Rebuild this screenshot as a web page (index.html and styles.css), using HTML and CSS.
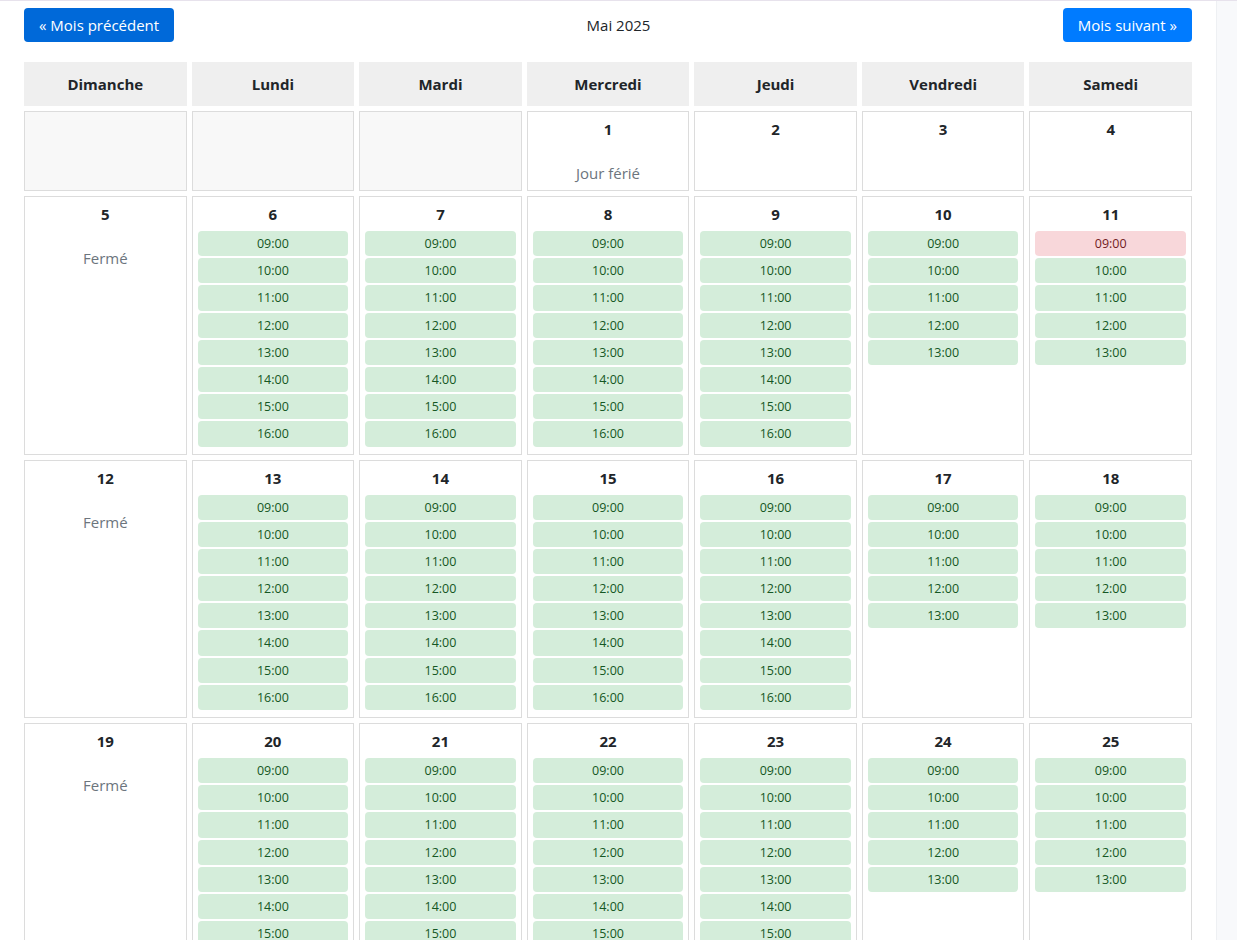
FILE: index.html
```html
<!DOCTYPE html>
<html lang="fr">
<head>
<meta charset="utf-8">
<title>Calendrier - Mai 2025</title>
<link rel="stylesheet" href="styles.css">
</head>
<body>
<div class="page">
  <main class="main">
    <div class="topbar">
      <button class="btn btn-prev">« Mois précédent</button>
      <div class="month">Mai 2025</div>
      <button class="btn btn-next">Mois suivant »</button>
    </div>
    <div class="calendar">
      <div class="head">Dimanche</div>
      <div class="head">Lundi</div>
      <div class="head">Mardi</div>
      <div class="head">Mercredi</div>
      <div class="head">Jeudi</div>
      <div class="head">Vendredi</div>
      <div class="head">Samedi</div>

      <div class="cell empty"></div>
      <div class="cell empty"></div>
      <div class="cell empty"></div>
      <div class="cell"><div class="num">1</div><div class="note">Jour férié</div></div>
      <div class="cell"><div class="num">2</div></div>
      <div class="cell"><div class="num">3</div></div>
      <div class="cell"><div class="num">4</div></div>

      <div class="cell"><div class="num">5</div><div class="note">Fermé</div></div>
      <div class="cell"><div class="num">6</div><div class="slot">09:00</div><div class="slot">10:00</div><div class="slot">11:00</div><div class="slot">12:00</div><div class="slot">13:00</div><div class="slot">14:00</div><div class="slot">15:00</div><div class="slot">16:00</div></div>
      <div class="cell"><div class="num">7</div><div class="slot">09:00</div><div class="slot">10:00</div><div class="slot">11:00</div><div class="slot">12:00</div><div class="slot">13:00</div><div class="slot">14:00</div><div class="slot">15:00</div><div class="slot">16:00</div></div>
      <div class="cell"><div class="num">8</div><div class="slot">09:00</div><div class="slot">10:00</div><div class="slot">11:00</div><div class="slot">12:00</div><div class="slot">13:00</div><div class="slot">14:00</div><div class="slot">15:00</div><div class="slot">16:00</div></div>
      <div class="cell"><div class="num">9</div><div class="slot">09:00</div><div class="slot">10:00</div><div class="slot">11:00</div><div class="slot">12:00</div><div class="slot">13:00</div><div class="slot">14:00</div><div class="slot">15:00</div><div class="slot">16:00</div></div>
      <div class="cell"><div class="num">10</div><div class="slot">09:00</div><div class="slot">10:00</div><div class="slot">11:00</div><div class="slot">12:00</div><div class="slot">13:00</div></div>
      <div class="cell"><div class="num">11</div><div class="slot booked">09:00</div><div class="slot">10:00</div><div class="slot">11:00</div><div class="slot">12:00</div><div class="slot">13:00</div></div>

      <div class="cell"><div class="num">12</div><div class="note">Fermé</div></div>
      <div class="cell"><div class="num">13</div><div class="slot">09:00</div><div class="slot">10:00</div><div class="slot">11:00</div><div class="slot">12:00</div><div class="slot">13:00</div><div class="slot">14:00</div><div class="slot">15:00</div><div class="slot">16:00</div></div>
      <div class="cell"><div class="num">14</div><div class="slot">09:00</div><div class="slot">10:00</div><div class="slot">11:00</div><div class="slot">12:00</div><div class="slot">13:00</div><div class="slot">14:00</div><div class="slot">15:00</div><div class="slot">16:00</div></div>
      <div class="cell"><div class="num">15</div><div class="slot">09:00</div><div class="slot">10:00</div><div class="slot">11:00</div><div class="slot">12:00</div><div class="slot">13:00</div><div class="slot">14:00</div><div class="slot">15:00</div><div class="slot">16:00</div></div>
      <div class="cell"><div class="num">16</div><div class="slot">09:00</div><div class="slot">10:00</div><div class="slot">11:00</div><div class="slot">12:00</div><div class="slot">13:00</div><div class="slot">14:00</div><div class="slot">15:00</div><div class="slot">16:00</div></div>
      <div class="cell"><div class="num">17</div><div class="slot">09:00</div><div class="slot">10:00</div><div class="slot">11:00</div><div class="slot">12:00</div><div class="slot">13:00</div></div>
      <div class="cell"><div class="num">18</div><div class="slot">09:00</div><div class="slot">10:00</div><div class="slot">11:00</div><div class="slot">12:00</div><div class="slot">13:00</div></div>

      <div class="cell"><div class="num">19</div><div class="note">Fermé</div></div>
      <div class="cell"><div class="num">20</div><div class="slot">09:00</div><div class="slot">10:00</div><div class="slot">11:00</div><div class="slot">12:00</div><div class="slot">13:00</div><div class="slot">14:00</div><div class="slot">15:00</div><div class="slot">16:00</div></div>
      <div class="cell"><div class="num">21</div><div class="slot">09:00</div><div class="slot">10:00</div><div class="slot">11:00</div><div class="slot">12:00</div><div class="slot">13:00</div><div class="slot">14:00</div><div class="slot">15:00</div><div class="slot">16:00</div></div>
      <div class="cell"><div class="num">22</div><div class="slot">09:00</div><div class="slot">10:00</div><div class="slot">11:00</div><div class="slot">12:00</div><div class="slot">13:00</div><div class="slot">14:00</div><div class="slot">15:00</div><div class="slot">16:00</div></div>
      <div class="cell"><div class="num">23</div><div class="slot">09:00</div><div class="slot">10:00</div><div class="slot">11:00</div><div class="slot">12:00</div><div class="slot">13:00</div><div class="slot">14:00</div><div class="slot">15:00</div><div class="slot">16:00</div></div>
      <div class="cell"><div class="num">24</div><div class="slot">09:00</div><div class="slot">10:00</div><div class="slot">11:00</div><div class="slot">12:00</div><div class="slot">13:00</div></div>
      <div class="cell"><div class="num">25</div><div class="slot">09:00</div><div class="slot">10:00</div><div class="slot">11:00</div><div class="slot">12:00</div><div class="slot">13:00</div></div>

      <div class="cell"><div class="num">26</div><div class="note">Fermé</div></div>
      <div class="cell"><div class="num">27</div><div class="slot">09:00</div><div class="slot">10:00</div><div class="slot">11:00</div><div class="slot">12:00</div><div class="slot">13:00</div><div class="slot">14:00</div><div class="slot">15:00</div><div class="slot">16:00</div></div>
      <div class="cell"><div class="num">28</div><div class="slot">09:00</div><div class="slot">10:00</div><div class="slot">11:00</div><div class="slot">12:00</div><div class="slot">13:00</div><div class="slot">14:00</div><div class="slot">15:00</div><div class="slot">16:00</div></div>
      <div class="cell"><div class="num">29</div><div class="slot">09:00</div><div class="slot">10:00</div><div class="slot">11:00</div><div class="slot">12:00</div><div class="slot">13:00</div><div class="slot">14:00</div><div class="slot">15:00</div><div class="slot">16:00</div></div>
      <div class="cell"><div class="num">30</div><div class="slot">09:00</div><div class="slot">10:00</div><div class="slot">11:00</div><div class="slot">12:00</div><div class="slot">13:00</div><div class="slot">14:00</div><div class="slot">15:00</div><div class="slot">16:00</div></div>
      <div class="cell"><div class="num">31</div><div class="slot">09:00</div><div class="slot">10:00</div><div class="slot">11:00</div><div class="slot">12:00</div><div class="slot">13:00</div></div>
      <div class="cell empty"></div>
    </div>
  </main>
  <aside class="strip"></aside>
</div>
</body>
</html>
```
FILE: styles.css
```css
* { box-sizing: border-box; }

html, body {
  margin: 0;
  padding: 0;
  background: #ffffff;
}

body {
  font-family: "Open Sans", "Noto Sans", "Liberation Sans", sans-serif;
  font-size: 15px;
  line-height: 24px;
  color: #212529;
  border-top: 1px solid #e7e2ec;
}

.page {
  display: flex;
  align-items: stretch;
  min-height: 939px;
}

.main {
  width: 1216px;
  flex: none;
  padding: 7px 24px 24px 24px;
}

.strip {
  flex: 1;
  background: #f8f9fb;
  border-left: 1px solid #eef0f3;
}

.topbar {
  display: flex;
  justify-content: space-between;
  align-items: center;
  height: 34px;
}

.btn {
  height: 34px;
  padding: 0 15px;
  border: none;
  border-radius: 4px;
  color: #ffffff;
  font-family: inherit;
  font-size: 15px;
  line-height: 34px;
  white-space: nowrap;
  cursor: pointer;
}

.btn-prev {
  background: #0069d9;
}

.btn-next {
  background: #007bff;
}

.month {
  font-size: 15px;
  color: #212529;
}

.calendar {
  margin-top: 20px;
  display: grid;
  grid-template-columns: repeat(7, 1fr);
  gap: 5px;
}

.head {
  background: #efefef;
  text-align: center;
  font-weight: 700;
  padding: 10px;
  line-height: 24px;
}

.cell {
  border: 1px solid #dcdcdc;
  padding: 5px;
  text-align: center;
  background: #ffffff;
}

.cell.empty {
  background: #f8f8f8;
}

.num {
  font-weight: 700;
  line-height: 24px;
  margin-bottom: 5px;
}

.note {
  margin-top: 20px;
  color: #6c757d;
  line-height: 24px;
}

.slot {
  height: 25.2px;
  line-height: 25.2px;
  margin-bottom: 2px;
  background: #d4edda;
  color: #155724;
  border-radius: 4px;
  font-size: 12.5px;
}

.slot.booked {
  background: #f8d7da;
  color: #721c24;
}
```
